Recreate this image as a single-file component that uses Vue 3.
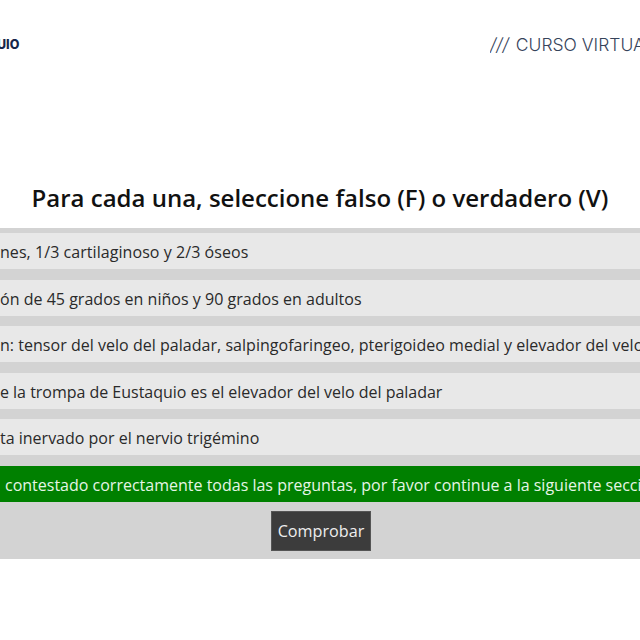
<script setup>
const rows = [
  { text: 'nes, 1/3 cartilaginoso y 2/3 óseos', cls: 'r1' },
  { text: 'ón de 45 grados en niños y 90 grados en adultos', cls: 'r2' },
  { text: 'n: tensor del velo del paladar, salpingofaringeo, pterigoideo medial y elevador del velo del paladar', cls: 'r3' },
  { text: 'e la trompa de Eustaquio es el elevador del velo del paladar', cls: 'r4' },
  { text: 'ta inervado por el nervio trigémino', cls: 'r5' },
]
</script>

<template>
  <div class="page">
    <header class="top">
      <span class="logo">UIO</span>
      <span class="course"><span class="slashes">///</span>CURSO VIRTUAL</span>
    </header>
    <h1 class="title">Para cada una, seleccione falso (F) o verdadero (V)</h1>
    <section class="panel">
      <div v-for="r in rows" :key="r.cls" class="row" :class="r.cls">{{ r.text }}</div>
      <div class="ok">contestado correctamente todas las preguntas, por favor continue a la siguiente sección</div>
      <div class="actions"><button class="check" type="button">Comprobar</button></div>
    </section>
  </div>
</template>

<style scoped>
.page {
  width: 640px;
  height: 640px;
  overflow: hidden;
  background: #fff;
  font-family: "Open Sans", "Noto Sans", sans-serif;
  color: #222;
}
.top {
  height: 88px;
  display: flex;
  justify-content: space-between;
  align-items: center;
  white-space: nowrap;
}
.logo {
  font: 800 12.5px "Inter", sans-serif;
  color: #16264a;
  margin-left: -3px;
}
.course {
  font: 300 17.5px "Inter", sans-serif;
  color: #36435a;
  width: 150px;
  flex: none;
  overflow: hidden;
}
.slashes {
  font-style: italic;
  font-size: 18px;
  margin-right: 7px;
}
.title {
  margin: 0;
  height: 140px;
  padding-top: 94px;
  box-sizing: border-box;
  text-align: center;
  font-size: 24px;
  font-weight: 600;
  line-height: 32px;
  color: #111;
  white-space: nowrap;
}
.panel {
  background: #d3d3d3;
  padding-top: 5px;
  height: 331px;
  box-sizing: border-box;
  display: flex;
  flex-direction: column;
  gap: 10.5px;
}
.row {
  background: #e8e8e8;
  height: 36px;
  line-height: 38px;
  font-size: 16px;
  white-space: nowrap;
  color: #2a2a2a;
}
.r1 {
  letter-spacing: 0.06px;
}
.r2 {
  letter-spacing: 0.02px;
}
.r3 {
  letter-spacing: 0.03px;
}
.r4 {
  letter-spacing: -0.02px;
}
.ok {
  background: #008000;
  color: #e6f5e6;
  height: 36px;
  line-height: 38px;
  padding-left: 5px;
  font-size: 16px;
  white-space: nowrap;
}
.actions {
  display: flex;
  justify-content: center;
  margin-top: -1.5px;
  padding-left: 2px;
}
.check {
  width: 100px;
  height: 40px;
  background: #3c3c3c;
  color: #eee;
  border: 1px solid #555;
  padding: 1px 0 0;
  font: 400 16.2px "Open Sans", sans-serif;
}
</style>
